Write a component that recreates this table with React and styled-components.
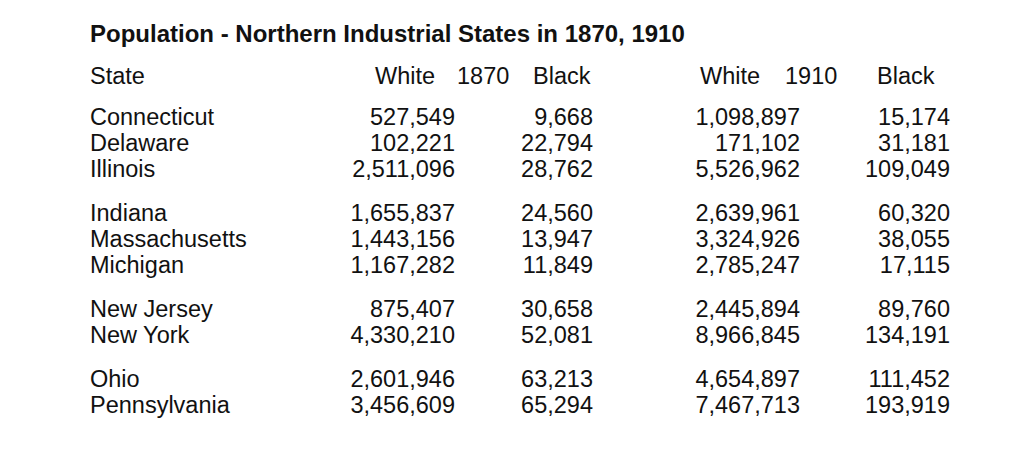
import React from 'react'
import styled, { createGlobalStyle } from 'styled-components'

const GlobalStyle = createGlobalStyle`
    html, body {
        margin: 0;
        padding: 0;
        background: #fff;
    }
    body {
        font-family: "Liberation Sans", Arial, Helvetica, sans-serif;
        color: #111;
    }
`

const Page = styled.div`
    width: 1024px;
    height: 453px;
    box-sizing: border-box;
    padding: 21px 0 0 90px;
    background: #fff;
    overflow: hidden;
`

const Title = styled.h1`
    margin: 0;
    font-size: 24px;
    line-height: 26px;
    font-weight: 700;
`

const HeaderRow = styled.div`
    display: grid;
    grid-template-columns: 285px 82px 76px 167px 85px 92px auto;
    margin-top: 16px;
    font-size: 23.5px;
    line-height: 26px;
`

const Body = styled.div`
    display: flex;
    flex-direction: column;
    gap: 18px;
    margin-top: 15px;
`

const Group = styled.div`
    display: flex;
    flex-direction: column;
`

const Row = styled.div`
    display: grid;
    grid-template-columns: 250px 115px 138px 207px 150px;
    font-size: 23.5px;
    line-height: 26px;
`

const Cell = styled.span`
    text-align: ${props => (props.num ? 'right' : 'left')};
    white-space: nowrap;
`

const groups = [
    [
        ['Connecticut', '527,549', '9,668', '1,098,897', '15,174'],
        ['Delaware', '102,221', '22,794', '171,102', '31,181'],
        ['Illinois', '2,511,096', '28,762', '5,526,962', '109,049'],
    ],
    [
        ['Indiana', '1,655,837', '24,560', '2,639,961', '60,320'],
        ['Massachusetts', '1,443,156', '13,947', '3,324,926', '38,055'],
        ['Michigan', '1,167,282', '11,849', '2,785,247', '17,115'],
    ],
    [
        ['New Jersey', '875,407', '30,658', '2,445,894', '89,760'],
        ['New York', '4,330,210', '52,081', '8,966,845', '134,191'],
    ],
    [
        ['Ohio', '2,601,946', '63,213', '4,654,897', '111,452'],
        ['Pennsylvania', '3,456,609', '65,294', '7,467,713', '193,919'],
    ],
]

const headers = ['State', 'White', '1870', 'Black', 'White', '1910', 'Black']

function App() {
    return (
        <Page>
            <GlobalStyle />
            <Title>Population - Northern Industrial States in 1870, 1910</Title>
            <HeaderRow>
                {headers.map((h, i) => (
                    <Cell key={i}>{h}</Cell>
                ))}
            </HeaderRow>
            <Body>
                {groups.map((rows, gi) => (
                    <Group key={gi}>
                        {rows.map(row => (
                            <Row key={row[0]}>
                                {row.map((value, ci) => (
                                    <Cell key={ci} num={ci > 0}>
                                        {value}
                                    </Cell>
                                ))}
                            </Row>
                        ))}
                    </Group>
                ))}
            </Body>
        </Page>
    )
}

export default App
